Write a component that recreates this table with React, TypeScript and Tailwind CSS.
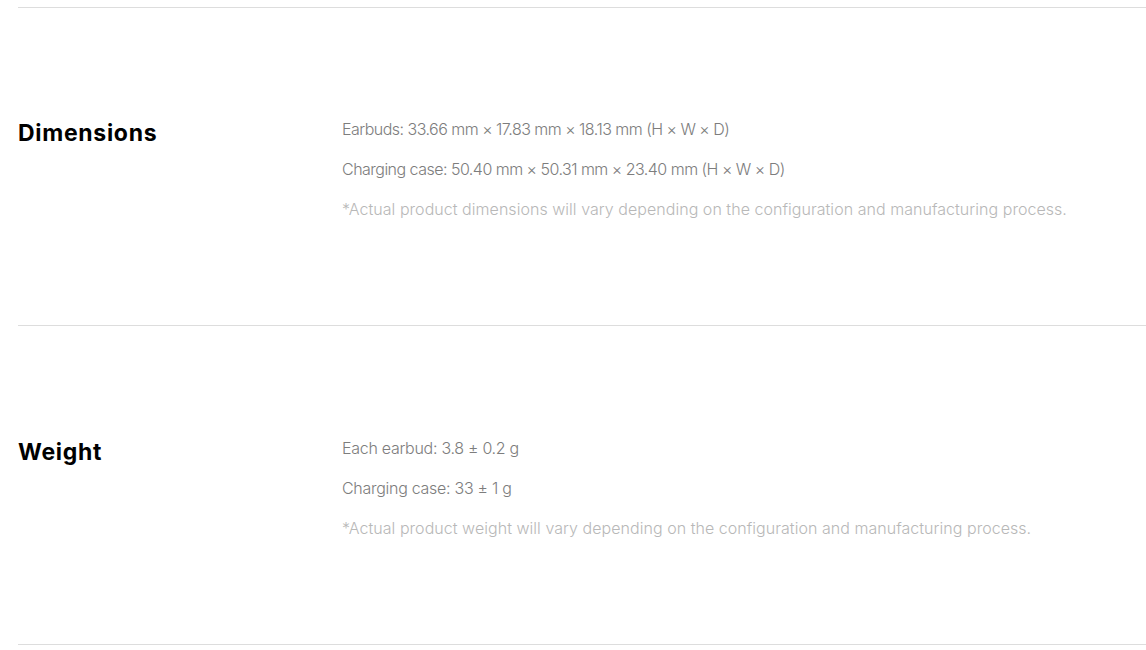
import React from 'react'

const specs = [
  {
    title: 'Dimensions',
    lines: [
      'Earbuds: 33.66 mm × 17.83 mm × 18.13 mm (H × W × D)',
      'Charging case: 50.40 mm × 50.31 mm × 23.40 mm (H × W × D)',
    ],
    tracking: 'tracking-[-0.52px]',
    note: '*Actual product dimensions will vary depending on the configuration and manufacturing process.',
  },
  {
    title: 'Weight',
    lines: ['Each earbud: 3.8 ± 0.2 g', 'Charging case: 33 ± 1 g'],
    tracking: 'tracking-[-0.28px]',
    note: '*Actual product weight will vary depending on the configuration and manufacturing process.',
  },
]

const App = () => {
  return (
    <div className="w-full bg-white pl-[18px] pt-[7px] font-['Inter',sans-serif]">
      <div className="border-t border-[#dddddd]">
        {specs.map((spec) => (
          <div
            key={spec.title}
            className="flex border-b border-[#dddddd] pt-[109px] pb-[104px] last:pt-[110px]"
          >
            <h3 className="w-[324px] shrink-0 text-[23px] leading-[32px] font-bold text-black tracking-[0.7px]">
              {spec.title}
            </h3>
            <div className="flex flex-col gap-4 text-[16px] leading-[24px] font-light">
              {spec.lines.map((line) => (
                <p key={line} className={`text-[#7d7d7d] ${spec.tracking}`}>
                  {line}
                </p>
              ))}
              <p className="text-[#b8b8b8] tracking-[0.04px]">{spec.note}</p>
            </div>
          </div>
        ))}
      </div>
    </div>
  )
}

export default App
